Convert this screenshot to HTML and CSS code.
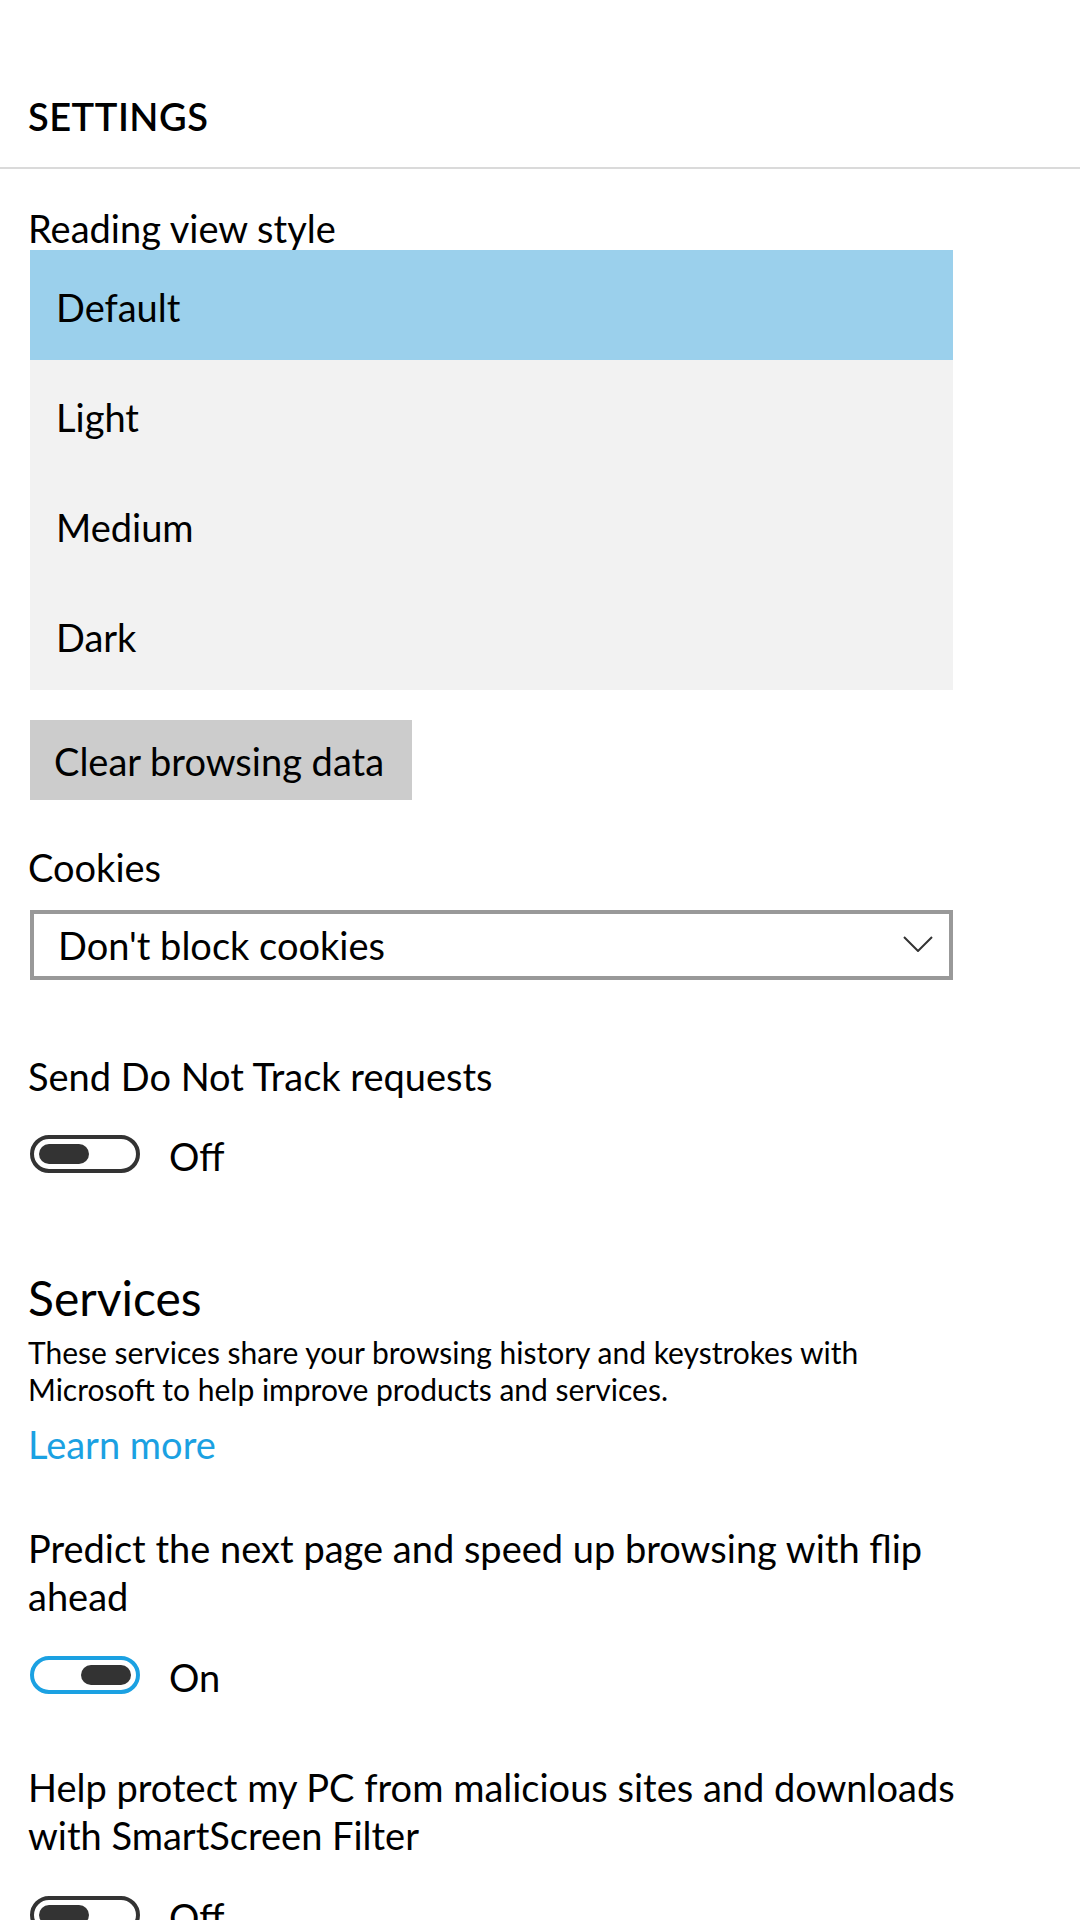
FILE: index.html
```html
<!DOCTYPE html>
<html lang="en">
<head>
    <meta charset="UTF-8">
    <meta name="viewport" content="width=device-width, initial-scale=1.0">
    <title>Settings</title>
    <link rel="stylesheet" href="styles.css">
</head>
<body>
    <header class="header">
        <h1>SETTINGS</h1>
    </header>

    <div class="content">
        <div class="label reading-label">Reading view style</div>
        <ul class="control style-list">
            <li class="selected">Default</li>
            <li>Light</li>
            <li>Medium</li>
            <li>Dark</li>
        </ul>

        <button class="control clear-btn">Clear browsing data</button>

        <div class="label cookies-label">Cookies</div>
        <div class="control select">
            <span>Don't block cookies</span>
            <svg width="30" height="16" viewBox="0 0 30 16">
                <polyline points="1,1 15,15 29,1" fill="none" stroke="#333" stroke-width="2"/>
            </svg>
        </div>

        <div class="label dnt-label">Send Do Not Track requests</div>
        <div class="control toggle-row dnt-toggle">
            <span class="toggle"><span class="knob"></span></span>
            <span class="toggle-text">Off</span>
        </div>

        <h2 class="section-title">Services</h2>
        <p class="section-desc">These services share your browsing history and keystrokes with Microsoft to help improve products and services.</p>
        <a class="learn-more" href="#">Learn more</a>

        <div class="label wrap-label predict-label">Predict the next page and speed up browsing with flip ahead</div>
        <div class="control toggle-row predict-toggle">
            <span class="toggle on"><span class="knob"></span></span>
            <span class="toggle-text">On</span>
        </div>

        <div class="label wrap-label smart-label">Help protect my PC from malicious sites and downloads with SmartScreen Filter</div>
        <div class="control toggle-row smart-toggle">
            <span class="toggle"><span class="knob"></span></span>
            <span class="toggle-text">Off</span>
        </div>
    </div>
</body>
</html>
```

FILE: styles.css
```css
body {
    margin: 0;
    padding: 0;
    background-color: #fff;
    color: #000;
    font-family: "Segoe UI", Lato, sans-serif;
    font-size: 38px;
    overflow: hidden;
}
.header {
    padding: 91px 0 26px 28px;
    border-bottom: 2px solid #dadada;
}
.header h1 {
    margin: 0;
    font-size: 38px;
    font-weight: 600;
    letter-spacing: 0.5px;
    line-height: 50px;
}
.content {
    padding-left: 28px;
    width: 925px;
}
.control {
    margin-left: 2px;
}
.label {
    line-height: 46px;
}
.wrap-label {
    line-height: 48px;
    width: 960px;
}
.reading-label {
    margin-top: 36px;
    margin-bottom: -1px;
}
.style-list {
    list-style: none;
    margin-top: 0;
    margin-bottom: 0;
    padding: 0;
    background-color: #f2f2f2;
}
.style-list li {
    height: 110px;
    line-height: 114px;
    padding-left: 26px;
}
.style-list li.selected {
    background-color: #9bd0ec;
}
.clear-btn {
    display: block;
    margin-top: 30px;
    height: 80px;
    padding: 0 28px 0 24px;
    border: none;
    background-color: #ccc;
    font-family: inherit;
    font-size: 38px;
    line-height: 82px;
    color: #000;
}
.cookies-label {
    margin-top: 44px;
}
.select {
    margin-top: 20px;
    height: 62px;
    border: 4px solid #999;
    display: flex;
    align-items: center;
    justify-content: space-between;
    padding: 0 16px 0 24px;
    line-height: 64px;
}
.select svg {
    margin-top: -2px;
}
.dnt-label {
    margin-top: 73px;
}
.toggle-row {
    display: flex;
    align-items: center;
    height: 38px;
}
.dnt-toggle {
    margin-top: 36px;
}
.toggle {
    box-sizing: border-box;
    width: 110px;
    height: 38px;
    border: 4px solid #333;
    border-radius: 19px;
    padding: 0 5px;
    display: flex;
    align-items: center;
}
.toggle.on {
    border-color: #1ba1e2;
    justify-content: flex-end;
}
.knob {
    width: 50px;
    height: 20px;
    border-radius: 10px;
    background-color: #333;
}
.toggle-text {
    margin-left: 29px;
    line-height: 38px;
    padding-top: 4px;
}
.section-title {
    margin: 97px 0 0;
    font-size: 48px;
    font-weight: normal;
    line-height: 56px;
}
.section-desc {
    margin: 8px 0 0;
    font-size: 30px;
    line-height: 37px;
    width: 900px;
}
.learn-more {
    display: block;
    margin-top: 13px;
    line-height: 46px;
    color: #1ba1e2;
    text-decoration: none;
}
.predict-label {
    margin-top: 57px;
}
.predict-toggle {
    margin-top: 36px;
}
.smart-label {
    margin-top: 69px;
}
.smart-toggle {
    margin-top: 37px;
}
```
